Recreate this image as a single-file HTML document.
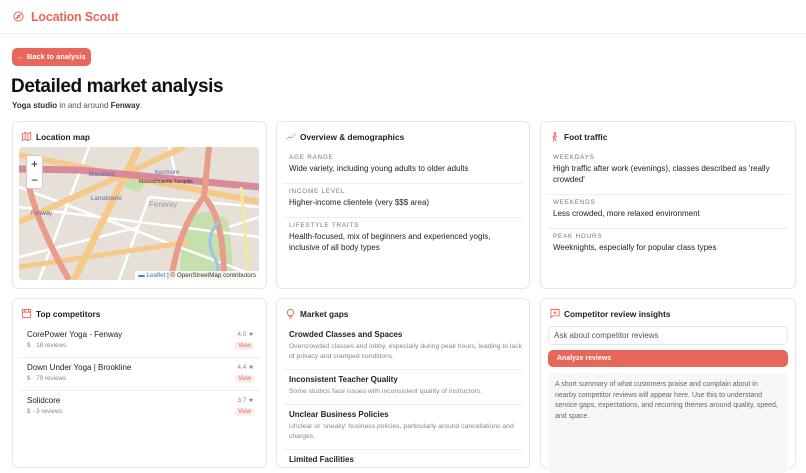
<!DOCTYPE html>
<html><head><style>
*{box-sizing:border-box;margin:0;padding:0}
body{width:806px;height:454px;overflow:hidden;background:#fff;font-family:"Liberation Sans",sans-serif;color:#1f2328;position:relative}
.hdr{height:34px;border-bottom:1px solid #efefef;background:#fff;position:relative}
.logo{position:absolute;left:31px;top:10px;font-size:12.5px;font-weight:bold;color:#e8665a;letter-spacing:-0.2px}
.back{position:absolute;left:12px;top:48px;width:79px;height:18px;background:#e8665a;border-radius:5px;color:#fff;font-size:7.5px;font-weight:bold;line-height:18px;text-align:center}
h1{position:absolute;left:11px;top:76px;font-size:19px;font-weight:bold;letter-spacing:-0.4px;color:#111}
.sub{position:absolute;left:12px;top:101px;font-size:8px;color:#555}
.sub b{color:#333}
.card{position:absolute;background:#fff;border:1px solid #e6e6e6;border-radius:6px}
.ct{position:absolute;left:23px;top:10px;font-size:8.3px;font-weight:bold;color:#222}
.ic{position:absolute;left:8px;top:9px}
.lab{font-size:6.3px;letter-spacing:0.8px;color:#777;margin-bottom:2px}
.val{font-size:8px;color:#222;line-height:11px}
.row{border-bottom:1px solid #eee;padding:4px 0 9px 6px;margin:0 6px}
.row:last-child{border-bottom:none}
.grow{border-bottom:1px solid #eee;padding:5px 0 7px 6px;margin:0 6px}
.crow{border-bottom:1px solid #eee;margin:0 6px;padding:5px 0 6px 8px;position:relative;height:33px}
.cn{font-size:8px;color:#222}
.cs{font-size:6.3px;color:#888;margin-top:3px}
.rt{position:absolute;right:6px;top:5px;font-size:6.5px;color:#888}
.vw{position:absolute;right:6px;top:17px;font-size:6px;color:#e8665a;background:#fdecea;border-radius:3px;padding:1px 3px}
.gt{font-size:8px;color:#222;font-weight:bold}
.gd{font-size:6.8px;color:#888;line-height:10px;margin-top:3px}
</style></head><body>
<div class="hdr">
<svg style="position:absolute;left:13px;top:11px" width="11" height="11" viewBox="0 0 24 24" fill="none" stroke="#e8665a" stroke-width="2.2"><circle cx="12" cy="12" r="10"/><path d="M16 8l-2.5 5.5L8 16l2.5-5.5z"/></svg>
<div class="logo">Location Scout</div></div>
<div class="back">← Back to analysis</div>
<h1>Detailed market analysis</h1>
<div class="sub"><b>Yoga studio</b> in and around <b>Fenway</b>.</div>

<div class="card" style="left:12px;top:121px;width:255px;height:168px">
<svg class="ic" width="11" height="11" viewBox="0 0 24 24" fill="none" stroke="#e8665a" stroke-width="2"><path d="M3 6l6-3 6 3 6-3v15l-6 3-6-3-6 3z M9 3v15 M15 6v15"/></svg>
<div class="ct">Location map</div>
<div style="position:absolute;left:6px;top:25px;width:240px;height:133px;border-radius:4px;overflow:hidden;background:#ece6df">
<svg width="240" height="133" viewBox="0 0 240 133">
<rect width="240" height="133" fill="#e6e0d8"/>
<path d="M165 75 Q190 55 210 75 L215 133 L160 133 Z" fill="#c4e0ac"/>
<path d="M110 25 Q120 20 130 30 L120 45 L105 40Z" fill="#c4e0ac"/>
<path d="M0 40 L240 130 M0 60 L240 90 M20 133 L70 0 M100 133 L130 50 M130 50 L240 60 M0 110 L120 80 M150 0 L160 40 M210 80 L240 70" stroke="#fff" stroke-width="2.5"/>
<path d="M0 8 L240 55" stroke="#f5c98a" stroke-width="6"/>
<path d="M0 75 L165 0" stroke="#f5c98a" stroke-width="6"/>
<path d="M55 133 L120 0" stroke="#f5c98a" stroke-width="7"/>
<path d="M0 120 L170 95" stroke="#f5c98a" stroke-width="5"/>
<path d="M60 23 L240 40" stroke="#d98a9a" stroke-width="7"/>
<path d="M0 22 L60 23" stroke="#d98a9a" stroke-width="7"/>
<path d="M190 0 L185 50 Q160 80 152 133" stroke="#e99c8a" stroke-width="6" fill="none"/>
<path d="M185 50 Q205 70 205 133" stroke="#e99c8a" stroke-width="6" fill="none"/>
<path d="M10 40 Q20 80 50 133" stroke="#e99c8a" stroke-width="6" fill="none"/>
<path d="M200 75 Q185 90 195 110 Q205 125 190 133" stroke="#9cc3e8" stroke-width="3" fill="none"/>
<path d="M222 40 L230 133" stroke="#f0ec9a" stroke-width="3"/>
<text x="130" y="60" font-size="8" fill="#999" font-family="Liberation Sans">Fenway</text>
<text x="136" y="27" font-size="6" fill="#5a6ab8" font-family="Liberation Sans">Kenmore</text>
<text x="70" y="29" font-size="6" fill="#5a6ab8" font-family="Liberation Sans">Blandford</text>
<text x="72" y="53" font-size="6" fill="#5a6ab8" font-family="Liberation Sans">Lansdowne</text>
<text x="12" y="68" font-size="6" fill="#5a6ab8" font-family="Liberation Sans">Fenway</text>
<text x="120" y="36" font-size="5" fill="#333" font-family="Liberation Sans">Massachusetts Turnpike</text>
</svg>
<div style="position:absolute;left:7px;top:8px;width:17px;height:34px;background:#fff;border:1px solid #ccc;border-radius:3px;font-size:12px;text-align:center;line-height:16px">+<br>−</div>
<div style="position:absolute;right:0;bottom:0;background:rgba(255,255,255,.8);font-size:6.3px;padding:1px 3px;color:#333"><span style="color:#3b7bbf">▬ Leaflet</span> | © OpenStreetMap contributors</div>
</div></div>

<div class="card" style="left:276px;top:121px;width:254px;height:168px">
<svg class="ic" width="12" height="11" viewBox="0 0 24 24" fill="none" stroke="#e8665a" stroke-width="2"><path d="M2 18l6-6 4 4 10-10" stroke-dasharray="3 2"/></svg>
<div class="ct">Overview &amp; demographics</div>
<div style="position:absolute;top:28px;left:0;right:0">
<div class="row"><div class="lab">AGE RANGE</div><div class="val">Wide variety, including young adults to older adults</div></div>
<div class="row"><div class="lab">INCOME LEVEL</div><div class="val">Higher-income clientele (very $$$ area)</div></div>
<div class="row"><div class="lab">LIFESTYLE TRAITS</div><div class="val">Health-focused, mix of beginners and experienced yogis, inclusive of all body types</div></div>
</div></div>

<div class="card" style="left:540px;top:121px;width:256px;height:168px">
<svg class="ic" width="11" height="12" viewBox="0 0 24 24" fill="none" stroke="#e8665a" stroke-width="2"><circle cx="13" cy="4" r="2"/><path d="M9 22l3-8 3 3v5 M12 14l1-6-4 3v4 M13 8l4 4"/></svg>
<div class="ct">Foot traffic</div>
<div style="position:absolute;top:28px;left:0;right:0">
<div class="row"><div class="lab">WEEKDAYS</div><div class="val">High traffic after work (evenings), classes described as 'really crowded'</div></div>
<div class="row"><div class="lab">WEEKENDS</div><div class="val">Less crowded, more relaxed environment</div></div>
<div class="row"><div class="lab">PEAK HOURS</div><div class="val">Weeknights, especially for popular class types</div></div>
</div></div>

<div class="card" style="left:12px;top:298px;width:255px;height:170px">
<svg class="ic" width="11" height="11" viewBox="0 0 24 24" fill="none" stroke="#e8665a" stroke-width="2"><rect x="3" y="3" width="18" height="18" rx="2"/><path d="M3 9h18 M8 3v6 M16 3v6"/></svg>
<div class="ct">Top competitors</div>
<div style="position:absolute;top:26px;left:0;right:0">
<div class="crow"><div class="cn">CorePower Yoga - Fenway</div><div class="cs">$ · 18 reviews</div><div class="rt">4.0 ★</div><div class="vw">View</div></div>
<div class="crow"><div class="cn">Down Under Yoga | Brookline</div><div class="cs">$ · 79 reviews</div><div class="rt">4.4 ★</div><div class="vw">View</div></div>
<div class="crow" style="border:none"><div class="cn">Solidcore</div><div class="cs">$ · 3 reviews</div><div class="rt">3.7 ★</div><div class="vw">View</div></div>
</div></div>

<div class="card" style="left:276px;top:298px;width:254px;height:170px">
<svg class="ic" width="11" height="12" viewBox="0 0 24 24" fill="none" stroke="#e8665a" stroke-width="2"><path d="M9 18h6 M10 22h4 M12 2a7 7 0 0 0-4 12.7V16h8v-1.3A7 7 0 0 0 12 2z"/></svg>
<div class="ct">Market gaps</div>
<div style="position:absolute;top:26px;left:0;right:0">
<div class="grow"><div class="gt">Crowded Classes and Spaces</div><div class="gd">Overcrowded classes and lobby, especially during peak hours, leading to lack of privacy and cramped conditions.</div></div>
<div class="grow"><div class="gt">Inconsistent Teacher Quality</div><div class="gd">Some studios face issues with inconsistent quality of instructors.</div></div>
<div class="grow"><div class="gt">Unclear Business Policies</div><div class="gd">Unclear or 'sneaky' business policies, particularly around cancellations and charges.</div></div>
<div class="grow" style="border:none"><div class="gt">Limited Facilities</div></div>
</div></div>

<div class="card" style="left:540px;top:298px;width:256px;height:170px">
<svg class="ic" width="12" height="11" viewBox="0 0 24 24" fill="none" stroke="#e8665a" stroke-width="2"><path d="M3 3h18v14H8l-5 4z"/><path d="M12 6l1.2 2.5 2.6.3-2 1.8.6 2.6-2.4-1.4-2.4 1.4.6-2.6-2-1.8 2.6-.3z" fill="#e8665a" stroke="none"/></svg>
<div class="ct">Competitor review insights</div>
<div style="position:absolute;left:7px;top:27px;width:240px;height:19px;border:1px solid #e6e6e6;border-radius:5px;font-size:8px;color:#555;line-height:18px;padding-left:5px">Ask about competitor reviews</div>
<div style="position:absolute;left:7px;top:51px;width:240px;height:17px;background:#e8665a;border-radius:5px;font-size:7px;color:#fff;font-weight:bold;line-height:17px;padding-left:9px">Analyze reviews</div>
<div style="position:absolute;left:7px;top:74px;width:240px;height:100px;background:#f6f7f9;border-radius:5px;font-size:7px;color:#666;line-height:10.5px;padding:7px 7px">A short summary of what customers praise and complain about in nearby competitor reviews will appear here. Use this to understand service gaps, expectations, and recurring themes around quality, speed, and space.</div>
</div>
</body></html>
